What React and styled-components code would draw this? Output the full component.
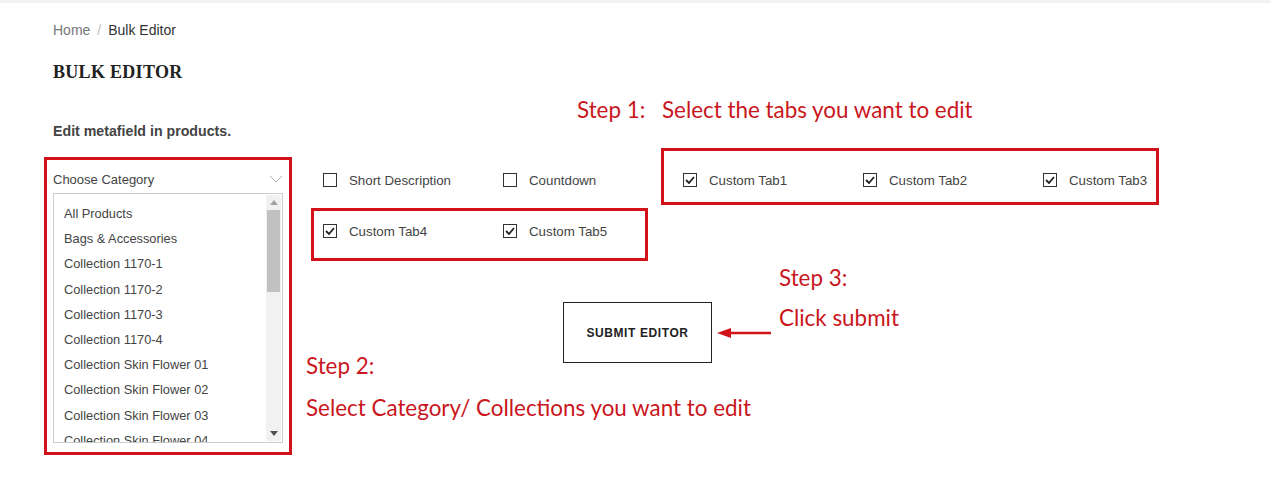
import React from "react";
import styled, { createGlobalStyle } from "styled-components";

const GlobalStyle = createGlobalStyle`
  body {
    margin: 0;
    background: #fff;
    font-family: "Liberation Sans", Arial, sans-serif;
    color: #333;
  }
`;

const TopRule = styled.div`
  height: 3px;
  background: #f2f2f2;
`;

const Page = styled.div`
  position: relative;
  width: 1271px;
  height: 477px;
  box-sizing: border-box;
  padding: 0 40px 0 53px;
  overflow: hidden;
`;

const Breadcrumb = styled.div`
  margin-top: 18px;
  font-size: 14px;
  line-height: 18px;
  display: flex;
  gap: 7px;
`;

const Crumb = styled.span`
  color: ${(p) => (p.$current ? "#333" : "#777")};
`;

const Sep = styled.span`
  color: #bbb;
`;

const Title = styled.h1`
  margin: 22px 0 0;
  font-family: "Liberation Serif", "Times New Roman", serif;
  font-size: 18px;
  line-height: 22px;
  font-weight: 700;
  letter-spacing: 0.3px;
  color: #222;
`;

const Intro = styled.p`
  margin: 39px 0 0;
  font-size: 14.2px;
  line-height: 18px;
  font-weight: 700;
  color: #444;
`;

const Form = styled.div`
  margin-top: 25px;
  display: flex;
  gap: 40px;
`;

const SelectBox = styled.div`
  flex: none;
  width: 230px;
  display: flex;
  flex-direction: column;
`;

const SelectHead = styled.div`
  height: 28px;
  display: flex;
  align-items: center;
  justify-content: space-between;
  font-size: 13px;
  color: #444;
`;

const ListBox = styled.div`
  height: 250px;
  box-sizing: border-box;
  border: 1px solid #ccc;
  display: flex;
  overflow: hidden;
`;

const Options = styled.div`
  flex: 1;
  padding: 7px 0 0 10px;
`;

const Option = styled.div`
  font-size: 12.8px;
  line-height: 25.2px;
  color: #444;
  white-space: nowrap;
`;

const ScrollTrack = styled.div`
  width: 15px;
  margin: 1px 1px 1px 0;
  background: #f1f1f1;
  display: flex;
  flex-direction: column;
  align-items: center;
`;

const ScrollArrow = styled.div`
  height: 15px;
  display: flex;
  align-items: center;
  justify-content: center;
`;

const ScrollThumb = styled.div`
  width: 13px;
  height: 82px;
  background: #c1c1c1;
`;

const ScrollFill = styled.div`
  flex: 1;
`;

const RightCol = styled.div`
  flex: none;
  display: flex;
  flex-direction: column;
`;

const CheckGrid = styled.div`
  display: grid;
  grid-template-columns: repeat(5, 180px);
  row-gap: 21px;
`;

const CheckItem = styled.label`
  height: 30px;
  display: flex;
  align-items: center;
  gap: 12px;
  font-size: 13.3px;
  color: #444;
`;

const Box = styled.span`
  width: 14px;
  height: 14px;
  box-sizing: border-box;
  border: 1px solid #333;
  display: flex;
  align-items: center;
  justify-content: center;
`;

const SubmitButton = styled.button`
  align-self: flex-start;
  margin: 56px 0 0 240px;
  width: 149px;
  height: 61px;
  background: #fff;
  border: 1px solid #222;
  font-family: "Liberation Sans", Arial, sans-serif;
  font-size: 12px;
  font-weight: 700;
  letter-spacing: 0.6px;
  color: #222;
`;

/* annotation overlay */
const RedFrame = styled.div`
  position: absolute;
  left: ${(p) => p.$x}px;
  top: ${(p) => p.$y}px;
  width: ${(p) => p.$w}px;
  height: ${(p) => p.$h}px;
  box-sizing: border-box;
  border: 3px solid #d2111b;
  pointer-events: none;
`;

const Note = styled.div`
  position: absolute;
  left: ${(p) => p.$x}px;
  top: ${(p) => p.$y}px;
  font-family: Lato, "Open Sans", sans-serif;
  font-size: 22.4px;
  line-height: 26px;
  color: #c9161d;
  white-space: nowrap;
`;

const Arrow = styled.svg`
  position: absolute;
  left: 716px;
  top: 323px;
`;

const Check = () => (
  <svg width="10" height="8" viewBox="0 0 10 8">
    <path d="M1 4 L4 7 L9 1" fill="none" stroke="#222" strokeWidth="1.8" />
  </svg>
);

const Checkbox = ({ label, checked }) => (
  <CheckItem>
    <Box>{checked && <Check />}</Box>
    {label}
  </CheckItem>
);

const options = [
  "All Products",
  "Bags & Accessories",
  "Collection 1170-1",
  "Collection 1170-2",
  "Collection 1170-3",
  "Collection 1170-4",
  "Collection Skin Flower 01",
  "Collection Skin Flower 02",
  "Collection Skin Flower 03",
  "Collection Skin Flower 04",
];

const tabs = [
  ["Short Description", false],
  ["Countdown", false],
  ["Custom Tab1", true],
  ["Custom Tab2", true],
  ["Custom Tab3", true],
  ["Custom Tab4", true],
  ["Custom Tab5", true],
];

export default function App() {
  return (
    <>
      <GlobalStyle />
      <TopRule />
      <Page>
        <Breadcrumb>
          <Crumb>Home</Crumb>
          <Sep>/</Sep>
          <Crumb $current>Bulk Editor</Crumb>
        </Breadcrumb>
        <Title>BULK EDITOR</Title>
        <Intro>Edit metafield in products.</Intro>

        <Form>
          <SelectBox>
            <SelectHead>
              Choose Category
              <svg width="14" height="8" viewBox="0 0 14 8">
                <path d="M1 1 L7 7 L13 1" fill="none" stroke="#aaa" strokeWidth="1" />
              </svg>
            </SelectHead>
            <ListBox>
              <Options>
                {options.map((o) => (
                  <Option key={o}>{o}</Option>
                ))}
              </Options>
              <ScrollTrack>
                <ScrollArrow>
                  <svg width="8" height="5" viewBox="0 0 8 5">
                    <path d="M0 5 L4 0 L8 5 Z" fill="#a3a3a3" />
                  </svg>
                </ScrollArrow>
                <ScrollThumb />
                <ScrollFill />
                <ScrollArrow>
                  <svg width="8" height="5" viewBox="0 0 8 5">
                    <path d="M0 0 L4 5 L8 0 Z" fill="#505050" />
                  </svg>
                </ScrollArrow>
              </ScrollTrack>
            </ListBox>
          </SelectBox>

          <RightCol>
            <CheckGrid>
              {tabs.map(([label, checked]) => (
                <Checkbox key={label} label={label} checked={checked} />
              ))}
            </CheckGrid>
            <SubmitButton>SUBMIT EDITOR</SubmitButton>
          </RightCol>
        </Form>

        <RedFrame $x={44} $y={154} $w={248} $h={298} />
        <RedFrame $x={661} $y={145} $w={498} $h={57} />
        <RedFrame $x={311} $y={205} $w={337} $h={53} />

        <Note $x={577} $y={94}>Step 1:</Note>
        <Note $x={662} $y={94}>Select the tabs you want to edit</Note>
        <Note $x={779} $y={262}>Step 3:</Note>
        <Note $x={779} $y={302}>Click submit</Note>
        <Note $x={306} $y={350}>Step 2:</Note>
        <Note $x={306} $y={392}>Select Category/ Collections you want to edit</Note>

        <Arrow width="56" height="14" viewBox="0 0 56 14">
          <path d="M14 7 H55" stroke="#d2111b" strokeWidth="2.5" />
          <path d="M1 7 L15 2 L15 12 Z" fill="#d2111b" />
        </Arrow>
      </Page>
    </>
  );
}
